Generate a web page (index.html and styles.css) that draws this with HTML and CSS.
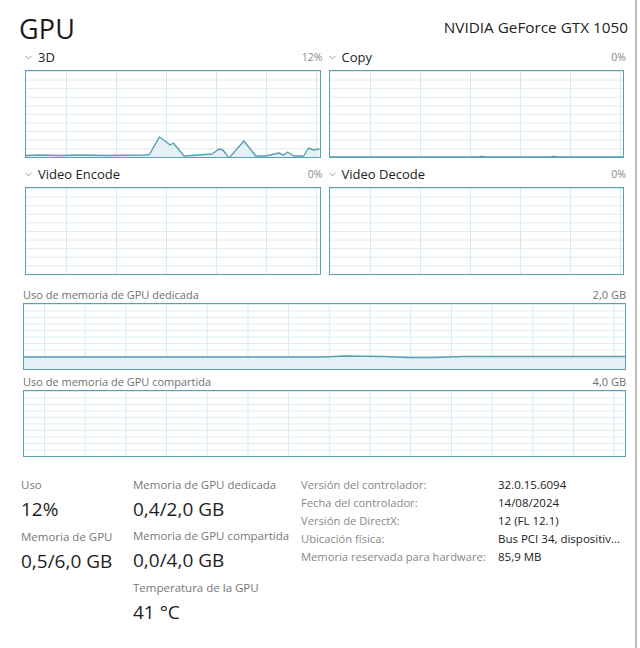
FILE: index.html
```html
<!DOCTYPE html>
<html lang="es">
<head>
<meta charset="utf-8">
<title>GPU</title>
<link rel="stylesheet" href="styles.css">
</head>
<body>
<div class="page">
  <header class="header">
    <h1 class="title">GPU</h1>
    <div class="device">NVIDIA GeForce GTX 1050</div>
  </header>

  <section class="engines">
    <div class="engine">
      <div class="engine-head">
        <span class="engine-name"><svg class="chev" viewBox="0 0 8 5"><polyline points="0.5,0.5 4,4 7.5,0.5"/></svg>3D</span>
        <span class="engine-pct">12%</span>
      </div>
      <div class="graph engine-graph">
        <svg class="plot" viewBox="0 0 295 86" preserveAspectRatio="none">
          <polygon class="area" points="0,86 0,84.5 14,84 34,84.5 54,84 80,84.5 120,84 124,83.5 134,66 141,71 145,74 148,72 159,85 187,83 194,78 198,79 204,87 219,70 231,85 241,85 254,82 259,84 263,81 269,85 279,85 284,77 289,79 295,78 295,86"/>
          <polyline class="line" points="0,84.5 14,84 34,84.5 54,84 80,84.5 120,84 124,83.5 134,66 141,71 145,74 148,72 159,85 187,83 194,78 198,79 204,87 219,70 231,85 241,85 254,82 259,84 263,81 269,85 279,85 284,77 289,79 295,78"/>
        </svg>
      </div>
    </div>
    <div class="engine">
      <div class="engine-head">
        <span class="engine-name"><svg class="chev" viewBox="0 0 8 5"><polyline points="0.5,0.5 4,4 7.5,0.5"/></svg>Copy</span>
        <span class="engine-pct">0%</span>
      </div>
      <div class="graph engine-graph">
        <svg class="plot" viewBox="0 0 295 86" preserveAspectRatio="none">
          <polyline class="line" points="0,86 150,86 152,85.3 156,86 222,86 224,85.3 228,86 295,86"/>
        </svg>
      </div>
    </div>
    <div class="engine">
      <div class="engine-head">
        <span class="engine-name"><svg class="chev" viewBox="0 0 8 5"><polyline points="0.5,0.5 4,4 7.5,0.5"/></svg>Video Encode</span>
        <span class="engine-pct">0%</span>
      </div>
      <div class="graph engine-graph"></div>
    </div>
    <div class="engine">
      <div class="engine-head">
        <span class="engine-name"><svg class="chev" viewBox="0 0 8 5"><polyline points="0.5,0.5 4,4 7.5,0.5"/></svg>Video Decode</span>
        <span class="engine-pct">0%</span>
      </div>
      <div class="graph engine-graph"></div>
    </div>
  </section>

  <section class="memory">
    <div class="mem-head">
      <span>Uso de memoria de GPU dedicada</span>
      <span>2,0 GB</span>
    </div>
    <div class="graph mem-graph">
      <svg class="plot" viewBox="0 0 602 65" preserveAspectRatio="none">
        <polygon class="area" points="0,65 0,53 300,53 320,52 360,52.5 385,53.5 410,53.5 440,52.5 460,52.5 602,52.5 602,65"/>
        <polyline class="line" points="0,53 300,53 320,52 360,52.5 385,53.5 410,53.5 440,52.5 460,52.5 602,52.5"/>
      </svg>
    </div>
    <div class="mem-head">
      <span>Uso de memoria de GPU compartida</span>
      <span>4,0 GB</span>
    </div>
    <div class="graph mem-graph"></div>
  </section>

  <section class="stats">
    <div class="stat-col col-a">
      <div class="stat">
        <div class="stat-label">Uso</div>
        <div class="stat-value">12%</div>
      </div>
      <div class="stat">
        <div class="stat-label">Memoria de GPU</div>
        <div class="stat-value">0,5/6,0 GB</div>
      </div>
    </div>
    <div class="stat-col col-b">
      <div class="stat">
        <div class="stat-label">Memoria de GPU dedicada</div>
        <div class="stat-value">0,4/2,0 GB</div>
      </div>
      <div class="stat">
        <div class="stat-label">Memoria de GPU compartida</div>
        <div class="stat-value">0,0/4,0 GB</div>
      </div>
      <div class="stat">
        <div class="stat-label">Temperatura de la GPU</div>
        <div class="stat-value">41 °C</div>
      </div>
    </div>
    <dl class="props">
      <dt>Versión del controlador:</dt><dd>32.0.15.6094</dd>
      <dt>Fecha del controlador:</dt><dd>14/08/2024</dd>
      <dt>Versión de DirectX:</dt><dd>12 (FL 12.1)</dd>
      <dt>Ubicación física:</dt><dd>Bus PCI 34, dispositiv...</dd>
      <dt>Memoria reservada para hardware:</dt><dd>85,9 MB</dd>
    </dl>
  </section>
</div>
</body>
</html>
```

FILE: styles.css
```css
* { box-sizing: border-box; }

html, body {
  margin: 0;
  padding: 0;
  background: #ffffff;
}

body {
  width: 640px;
  height: 648px;
  overflow: hidden;
  font-family: "Open Sans", "Noto Sans", sans-serif;
  color: #222;
}

.page {
  width: 637px;
  height: 648px;
  border-right: 2px solid #bdbdbd;
}

.header {
  display: flex;
  justify-content: space-between;
  align-items: flex-end;
  height: 46px;
  padding-left: 19px;
  padding-right: 7px;
}

.title {
  margin: 0;
  font-size: 27px;
  font-weight: 400;
  line-height: 34px;
  color: #1a1a1a;
  letter-spacing: 0.2px;
}

.device {
  font-size: 15.3px;
  line-height: 20px;
  color: #222;
  padding-bottom: 9px;
}

.engines {
  display: grid;
  grid-template-columns: 1fr 1fr;
  column-gap: 8px;
  row-gap: 9px;
  padding-left: 25px;
  padding-right: 11px;
  margin-top: 4px;
}

.engine-head {
  display: flex;
  justify-content: space-between;
  align-items: center;
  height: 14px;
  margin-bottom: 6px;
}

.engine-name {
  font-size: 13px;
  color: #222;
  display: flex;
  align-items: center;
}

.chev {
  width: 7px;
  height: 5px;
  margin: 0 6px 0 0;
  fill: none;
  stroke: #8a8a8a;
  stroke-width: 1;
}

.engine-pct {
  font-size: 10.5px;
  color: #888;
  margin-right: -2px;
}

.graph {
  border: 1px solid #5a9fb2;
  background-color: #fff;
  background-image:
    linear-gradient(to right, #d6e9ef 1px, transparent 1px),
    linear-gradient(to bottom, #dcecf1 1px, transparent 1px);
  position: relative;
  overflow: hidden;
}

.engine-graph {
  height: 88px;
  background-size: 50px 100%, 100% 8.6px;
  background-position: 40px 0, 0 8.6px;
}

.plot {
  display: block;
  width: 100%;
  height: 100%;
}

.area {
  fill: #e4f0f5;
  stroke: none;
}

.line {
  fill: none;
  stroke: #5a9fb2;
  stroke-width: 1.4;
  vector-effect: non-scaling-stroke;
  stroke-linejoin: round;
}

.memory {
  padding-left: 23px;
  padding-right: 9px;
  margin-top: 11px;
}

.mem-head {
  display: flex;
  justify-content: space-between;
  align-items: center;
  height: 16px;
  font-size: 11px;
  color: #707070;
  margin-bottom: 1px;
}

.mem-graph {
  height: 67px;
  margin-bottom: 3px;
  background-size: 40.7px 100%, 100% 6.5px;
  background-position: 20px 0, 0 6.5px;
}

.stats {
  display: flex;
  margin-top: 20px;
  padding-left: 21px;
}

.stat-col {
  display: flex;
  flex-direction: column;
}

.col-a { width: 112px; }
.col-b { width: 168px; }

.stat {
  margin-bottom: 7px;
}

.stat:last-child {
  margin-top: 1px;
}

.stat-label {
  font-size: 11.5px;
  line-height: 16px;
  color: #777;
}

.stat-value {
  font-size: 19px;
  line-height: 24px;
  color: #1e1e1e;
  margin-top: 4px;
}

.props {
  display: grid;
  grid-template-columns: 197px auto;
  grid-auto-rows: 18px;
  margin: -2px 0 0 0;
  align-items: center;
  font-size: 11.2px;
}

.props dt {
  color: #888;
  margin: 0;
}

.props dd {
  color: #222;
  margin: 0;
  font-size: 11.5px;
}
```
